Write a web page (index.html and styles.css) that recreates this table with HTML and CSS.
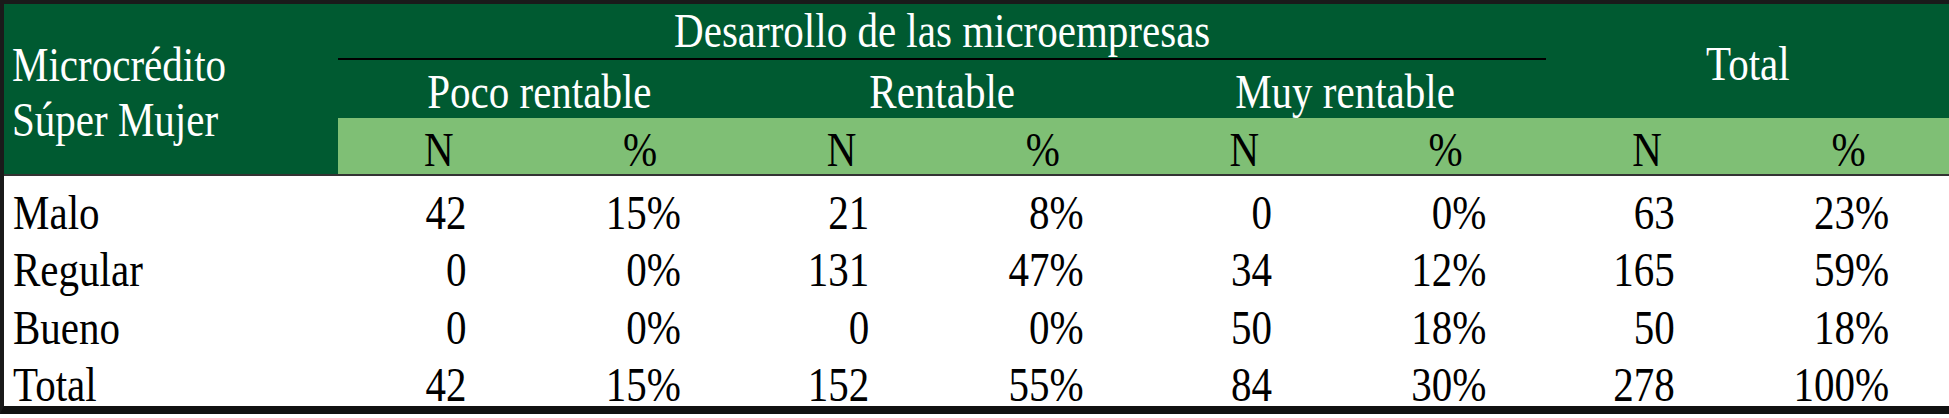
FILE: index.html
```html
<!DOCTYPE html>
<html lang="es">
<head>
<meta charset="utf-8">
<link rel="stylesheet" href="styles.css">
</head>
<body>
<table class="tbl">
  <colgroup>
    <col class="c-label">
    <col class="c-n"><col class="c-p">
    <col class="c-n"><col class="c-p">
    <col class="c-n"><col class="c-p">
    <col class="c-n"><col class="c-p">
  </colgroup>
  <thead>
    <tr class="h1">
      <th class="corner" rowspan="3"><span class="t">Microcrédito<br>Súper Mujer</span></th>
      <th class="group" colspan="6"><span class="t">Desarrollo de las microempresas</span></th>
      <th class="total" colspan="2" rowspan="2"><span class="t">Total</span></th>
    </tr>
    <tr class="h2">
      <th colspan="2"><span class="t">Poco rentable</span></th>
      <th colspan="2"><span class="t">Rentable</span></th>
      <th colspan="2"><span class="t">Muy rentable</span></th>
    </tr>
    <tr class="h3">
      <th><span class="t">N</span></th><th><span class="t">%</span></th>
      <th><span class="t">N</span></th><th><span class="t">%</span></th>
      <th><span class="t">N</span></th><th><span class="t">%</span></th>
      <th><span class="t">N</span></th><th><span class="t">%</span></th>
    </tr>
  </thead>
  <tbody>
    <tr>
      <td class="lbl"><span class="t">Malo</span></td>
      <td class="n"><span class="t">42</span></td><td class="p"><span class="t">15%</span></td>
      <td class="n"><span class="t">21</span></td><td class="p"><span class="t">8%</span></td>
      <td class="n"><span class="t">0</span></td><td class="p"><span class="t">0%</span></td>
      <td class="n"><span class="t">63</span></td><td class="p"><span class="t">23%</span></td>
    </tr>
    <tr>
      <td class="lbl"><span class="t">Regular</span></td>
      <td class="n"><span class="t">0</span></td><td class="p"><span class="t">0%</span></td>
      <td class="n"><span class="t">131</span></td><td class="p"><span class="t">47%</span></td>
      <td class="n"><span class="t">34</span></td><td class="p"><span class="t">12%</span></td>
      <td class="n"><span class="t">165</span></td><td class="p"><span class="t">59%</span></td>
    </tr>
    <tr>
      <td class="lbl"><span class="t">Bueno</span></td>
      <td class="n"><span class="t">0</span></td><td class="p"><span class="t">0%</span></td>
      <td class="n"><span class="t">0</span></td><td class="p"><span class="t">0%</span></td>
      <td class="n"><span class="t">50</span></td><td class="p"><span class="t">18%</span></td>
      <td class="n"><span class="t">50</span></td><td class="p"><span class="t">18%</span></td>
    </tr>
    <tr>
      <td class="lbl"><span class="t">Total</span></td>
      <td class="n"><span class="t">42</span></td><td class="p"><span class="t">15%</span></td>
      <td class="n"><span class="t">152</span></td><td class="p"><span class="t">55%</span></td>
      <td class="n"><span class="t">84</span></td><td class="p"><span class="t">30%</span></td>
      <td class="n"><span class="t">278</span></td><td class="p"><span class="t">100%</span></td>
    </tr>
  </tbody>
</table>
</body>
</html>
```

FILE: styles.css
```css
html, body {
  margin: 0;
  padding: 0;
  background: #ffffff;
}

.tbl {
  width: 1949px;
  table-layout: fixed;
  border-collapse: separate;
  border-spacing: 0;
  border-left: 4px solid #1a1a1a;
  border-top: 4px solid #1a1a1a;
  border-bottom: 8px solid #111111;
  font-family: "Liberation Serif", "Times New Roman", serif;
  font-size: 41px;
  line-height: 1;
  color: #000;
}

.c-label { width: 334px; }
.c-n, .c-p { width: 201.4px; }

.tbl th, .tbl td {
  padding: 0;
  font-weight: normal;
  white-space: nowrap;
}

.t {
  display: inline-block;
  transform: scaleY(1.18);
  transform-origin: center;
}

thead th {
  background: #005a31;
  color: #ffffff;
  text-align: center;
  vertical-align: middle;
}

.h1 th { height: 56px; }
.h2 th {
  height: 52px;
  padding-top: 6px;
}
.h3 th {
  height: 47px;
  padding-top: 9px;
  background: #7fbf75;
  color: #000;
  border-bottom: 2px solid #333333;
}

.tbl th.group {
  border-bottom: 2px solid #000000;
  height: 53px;
  padding-top: 1px;
}

.tbl th.corner {
  text-align: left;
  padding-left: 8px;
  padding-top: 6px;
  line-height: 46px;
  border-bottom: 2px solid #333333;
}

.tbl th.corner .t {
  transform-origin: left center;
}

.tbl th.total {
  padding-top: 6px;
}

tbody td {
  height: 57.5px;
  vertical-align: bottom;
  background: #ffffff;
}

td.lbl {
  text-align: left;
  padding-left: 9px;
}

td.n {
  text-align: right;
  padding-right: 73px;
}

td.p {
  text-align: right;
  padding-right: 60px;
}
```
